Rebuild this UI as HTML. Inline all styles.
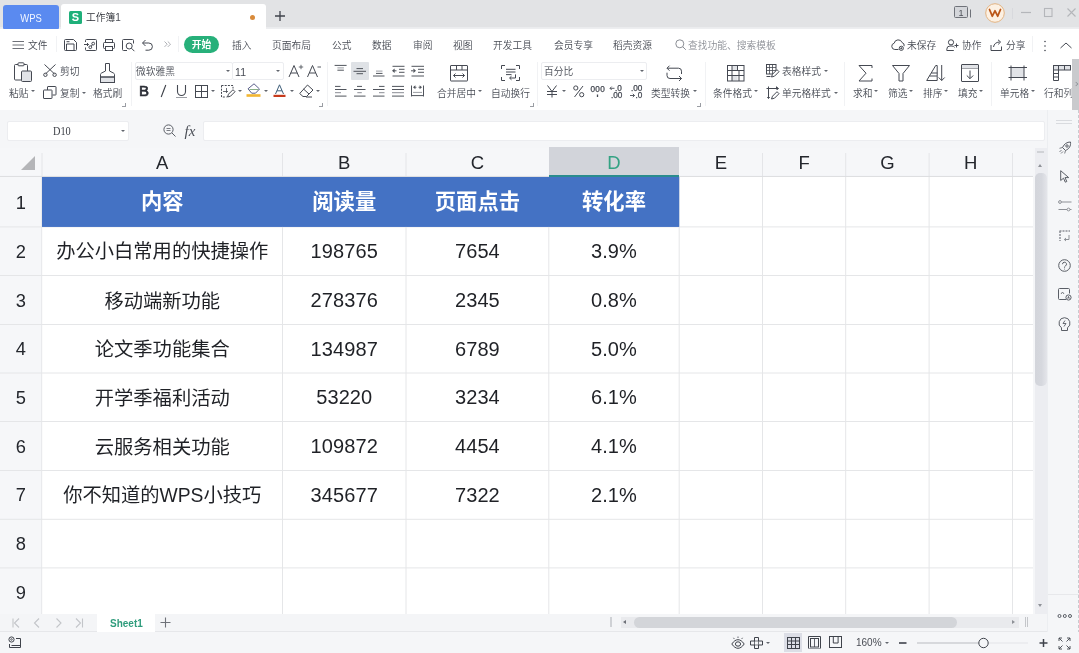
<!DOCTYPE html>
<html lang="zh-CN">
<head>
<meta charset="utf-8">
<title>工作簿1 - WPS</title>
<style>
*{box-sizing:border-box;margin:0;padding:0}
html,body{width:1079px;height:653px;overflow:hidden;background:#fff}
body{position:relative;will-change:transform;font-family:"Liberation Sans","Noto Sans CJK SC",sans-serif;color:#3a3e47;font-size:10px;line-height:1}
.a{position:absolute}
.t{position:absolute;white-space:nowrap;line-height:12px;height:12px;font-size:9.75px;color:#474b54;font-weight:350}
svg{position:absolute;overflow:visible;fill:none;stroke:#454952;stroke-width:1}
#title{left:0;top:0;width:1079px;height:29px;background:linear-gradient(180deg,#e2e3e5 0,#e2e3e5 26.5px,#ebecee 27.5px,#eeeff1 29px)}
#wps{left:3px;top:5px;width:56px;height:24px;background:#5a8af0;border-radius:3px 3px 1px 1px;color:#f2f6ff;font-size:11.5px;text-align:center;line-height:26px}
#wps span{display:inline-block;transform:scaleX(.82)}
#tab{left:61px;top:4px;width:205px;height:25px;background:#fff;border-radius:3px 3px 0 0}
#menu{left:0;top:29px;width:1079px;height:29px;background:#fff}
#ribbon{left:0;top:58px;width:1079px;height:52px;background:#fff}
#fbar{left:0;top:110px;width:1047px;height:38px;background:#f5f6f8}
#side{left:1047px;top:110px;width:32px;height:543px;background:#f5f6f8;border-left:1px solid #eceef1}
.box{position:absolute;background:#fff;border:1px solid #ecedf0;border-radius:2px}
#grid{left:0;top:148px;width:1033px;height:466px;background:#fff}
.c{text-align:center;font-size:19.3px;color:#1f2126;white-space:nowrap;padding-top:1.5px}
.n{font-size:20px;letter-spacing:.1px;padding-top:0}
.hd{text-align:center;font-size:21.3px;font-weight:700;color:#fff;line-height:50px;height:50px;top:29px;white-space:nowrap}
.colh{top:0;height:29px;line-height:29px;text-align:center;font-size:18.5px;color:#24272d}
.rown{left:0;width:41.5px;text-align:center;font-size:18.3px;color:#24272d;padding-top:.8px}
#sheetbar{left:0;top:613.5px;width:1047px;height:18.5px;background:#f4f5f7;border-bottom:1px solid #e6e7ea}
#status{left:0;top:632px;width:1079px;height:21px;background:#f5f6f8}

</style>
</head>
<body>
<!-- TITLE BAR -->
<div class="a" id="title"></div>
<div class="a" id="wps"><span>WPS</span></div>
<div class="a" id="tab"></div>
<div class="a" style="left:69px;top:11px;width:13px;height:13px;background:#1fb07a;border-radius:1.5px;color:#fff;font-size:11px;font-weight:700;line-height:13px;text-align:center">S</div>
<div class="t" style="left:86px;top:12.1px;color:#2b2e35">工作簿<span style="font-size:10px;font-weight:400;color:#4a4d55">1</span></div>
<div class="a" style="left:250px;top:15px;width:5px;height:5px;border-radius:50%;background:#d88a3a"></div>
<svg style="left:954px;top:6px;" width="18" height="12" viewBox="0 0 18 12"><rect x="0.5" y="0.5" width="13" height="11" rx="1" stroke="#6f7279" fill="#d4d6da"/><path d="M16.5 3.5v8" stroke="#6f7279"/><text x="7" y="9.6" font-family="Liberation Sans,sans-serif" font-size="9" text-anchor="middle" fill="#4d5058" stroke="none">1</text></svg>
<svg style="left:985px;top:3px;" width="20" height="20" viewBox="0 0 20 20"><circle cx="10" cy="10" r="9.3" fill="#fdf1e3" stroke="#e3b483" stroke-width="1"/><path d="M4.500 6.500 L7.300 13.200 L10 7.800 L12.700 13.200 L15.500 6.500" stroke="#bb571a" stroke-width="1.800" stroke-linejoin="round" stroke-linecap="round" fill="none"/></svg>
<div class="a" style="left:1012px;top:8px;width:1px;height:11px;background:#d8d9dd"></div>
<svg style="left:1020px;top:7px;" width="60" height="12" viewBox="0 0 60 12"><path d="M1 5.5h10" stroke="#b4b6ba" stroke-width="1.2"/><rect x="24.500" y="1.500" width="7.500" height="8" stroke="#b4b6ba" stroke-width="1.100"/><path d="M47.5 1.5l8 8M55.5 1.5l-8 8" stroke="#b4b6ba" stroke-width="1.1"/></svg>
<svg style="left:274px;top:10px;" width="12" height="12" viewBox="0 0 12 12"><path d="M6 1v10M1 6h10" stroke="#3f434b" stroke-width="1.3"/></svg>
<!-- MENU ROW -->
<div class="a" id="menu"></div>
<svg style="left:12px;top:40.7px;" width="12" height="9" viewBox="0 0 12 9"><path d="M0.5 0.5h11.5M0.5 4h11.5M0.5 7.5h11.5" stroke="#6f7279" stroke-width="1"/></svg>
<svg style="left:64px;top:38.7px;" width="13" height="12" viewBox="0 0 13 12"><path d="M0.500 1.500a1 1 0 0 1 1-1h8l3 3v7a1 1 0 0 1-1 1h-10a1 1 0 0 1-1-1z"/><path d="M2.500 11.500v-6.500h7.500v6.500M2.500 2.700h3"/></svg>
<svg style="left:85px;top:38.7px;" width="12" height="12" viewBox="0 0 12 12"><path d="M0.5 3v-1.5a1 1 0 0 1 1-1h9a1 1 0 0 1 1 1v9a1 1 0 0 1-1 1h-9a1 1 0 0 1-1-1v-2"/><path d="M-1 5.5h4.5M2 4l1.5 1.5L2 7"/><circle cx="5.3" cy="8.2" r="1.4"/><circle cx="8.2" cy="4.6" r="1.4"/><path d="M6.2 7.2l1.2-1.5"/></svg>
<svg style="left:103px;top:38.7px;" width="12" height="12" viewBox="0 0 12 12"><path d="M2.5 3.5v-3h7v3"/><rect x="0.5" y="3.5" width="11" height="6" rx="1"/><rect x="2.5" y="7.5" width="7" height="4" fill="#fff"/></svg>
<svg style="left:122px;top:38.7px;" width="13" height="13" viewBox="0 0 13 13"><path d="M11.5 4.5v-3a1 1 0 0 0-1-1h-9a1 1 0 0 0-1 1v9a1 1 0 0 0 1 1h3.5"/><circle cx="7.2" cy="7" r="3"/><path d="M9.4 9.2l3 3"/></svg>
<svg style="left:141px;top:38.7px;" width="13" height="13" viewBox="0 0 13 13"><path d="M4.5 1L1.5 4l3 3"/><path d="M1.8 4h6a3.6 3.6 0 0 1 0 7.2h-3.3"/></svg>
<svg style="left:164px;top:41px;" width="7" height="7" viewBox="0 0 7 7"><path d="M0.5 0.5l2.700 2.700l-2.700 2.700M3.800 0.500l2.700 2.700l-2.700 2.700" stroke="#9a9da3" stroke-width="0.8"/></svg>
<svg style="left:675px;top:38.7px;" width="12" height="12" viewBox="0 0 12 12"><circle cx="4.8" cy="4.8" r="4" stroke="#8b8e95"/><path d="M7.8 7.8l3 3" stroke="#8b8e95"/></svg>
<svg style="left:891px;top:38.7px;" width="14" height="12" viewBox="0 0 14 12"><path d="M7.5 10.5H3.8a3.2 3.2 0 0 1-.6-6.3 4.1 4.1 0 0 1 7.9-.6 3 3 0 0 1 2 3.6"/><circle cx="10.3" cy="9.3" r="2.1"/><circle cx="10.3" cy="9.3" r="0.6" fill="#454952"/></svg>
<svg style="left:946px;top:38.7px;" width="13" height="12" viewBox="0 0 13 12"><circle cx="5" cy="3.3" r="2.6"/><path d="M0.8 11.5v-1.3a3.2 3.2 0 0 1 3.2-3.2h2a3.2 3.2 0 0 1 2.6 1.4M0.8 11.5h7"/><path d="M8.5 6.5h4M10.5 4.5v4"/></svg>
<svg style="left:990px;top:38.7px;" width="13" height="12" viewBox="0 0 13 12"><path d="M1 6v5.5h10.5V7.5"/><path d="M3.5 8c.5-3 2.5-4.8 6-5"/><path d="M8 0.8l2.6 2.2-2.4 2.4"/></svg>
<svg style="left:1043px;top:39.7px;" width="4" height="12" viewBox="0 0 4 12"><circle cx="2" cy="1.5" r="0.8" fill="#454952" stroke="none"/><circle cx="2" cy="6" r="0.8" fill="#454952" stroke="none"/><circle cx="2" cy="10.5" r="0.8" fill="#454952" stroke="none"/></svg>
<svg style="left:1060px;top:41.7px;" width="12" height="7" viewBox="0 0 12 7"><path d="M0.5 6l5.5-5l5.5 5"/></svg>
<div class="t" style="left:28px;top:39.6px;">文件</div>
<div class="a" style="left:56px;top:36px;width:1px;height:16px;background:#f1f2f4"></div>
<div class="a" style="left:178px;top:36px;width:1px;height:16px;background:#f1f2f4"></div>
<div class="a" style="left:184px;top:36px;width:35px;height:17px;border-radius:9px;background:#27b07a;color:#fff;font-size:9.75px;font-weight:700;text-align:center;line-height:18.5px">开始</div>
<div class="t" style="left:232px;top:39.6px;">插入</div>
<div class="t" style="left:272px;top:39.6px;">页面布局</div>
<div class="t" style="left:332px;top:39.6px;">公式</div>
<div class="t" style="left:372px;top:39.6px;">数据</div>
<div class="t" style="left:413px;top:39.6px;">审阅</div>
<div class="t" style="left:453px;top:39.6px;">视图</div>
<div class="t" style="left:493px;top:39.6px;">开发工具</div>
<div class="t" style="left:554px;top:39.6px;">会员专享</div>
<div class="t" style="left:613px;top:39.6px;">稻壳资源</div>
<div class="t" style="left:688px;top:39.6px;color:#8b8e95">查找功能、搜索模板</div>
<div class="t" style="left:907px;top:39.6px;">未保存</div>
<div class="t" style="left:962px;top:39.6px;">协作</div>
<div class="t" style="left:1006px;top:39.6px;">分享</div>
<div class="a" style="left:1032px;top:36px;width:1px;height:16px;background:#f1f2f4"></div>
<!-- RIBBON -->
<div class="a" id="ribbon"></div>
<div class="a" style="left:350.5px;top:61.5px;width:18.5px;height:18.5px;background:#dfe2e6;border-radius:1px"></div>
<svg style="left:14px;top:62px;" width="19" height="21" viewBox="0 0 19 21"><path d="M4 2.5h-2.5a1 1 0 0 0-1 1v13.5a1 1 0 0 0 1 1h6M10 2.5h2.500a1 1 0 0 1 1 1v5.5"/><rect x="4" y="0.8" width="6" height="3" rx="0.8"/><rect x="7.5" y="9" width="10" height="10.5" rx="1" fill="#e1e3e7"/></svg>
<svg style="left:43px;top:63px;" width="15" height="15" viewBox="0 0 15 15"><path d="M1.5 1.5l10 9.4M12.5 1.5l-10 9.4"/><circle cx="2.4" cy="11.8" r="1.7"/><circle cx="11.6" cy="11.8" r="1.7"/></svg>
<svg style="left:43px;top:86px;" width="14" height="14" viewBox="0 0 14 14"><path d="M4.5 4V1a.5.5 0 0 1 .5-.5h7.500a.5.5 0 0 1 .5.5v7.500a.5.5 0 0 1-.5.5h-3"/><rect x="0.5" y="4" width="8.5" height="8.5" rx=".5"/></svg>
<svg style="left:100px;top:63px;" width="15" height="21" viewBox="0 0 15 21"><path d="M5.500 0.5h4v7.500l4.200 2.200a1.500 1.500 0 0 1 .8 1.300v8h-14v-8a1.500 1.500 0 0 1 .8-1.300l4.200-2.200z"/><rect x="0.5" y="14" width="14" height="5.500" fill="#e1e3e7"/><path d="M0.5 14h14"/></svg>
<svg style="left:288px;top:64px;" width="34" height="14" viewBox="0 0 34 14"><path d="M1 13L6 1.500L11 13M2.800 9h6.400" stroke-width="1"/><path d="M10.800 3h4.400M13 0.800v4.400" stroke-width="0.800"/><path d="M19.500 13L24.500 1.500L29.500 13M21.300 9h6.400" stroke-width="1"/><path d="M29.500 3h3.500" stroke-width="0.9"/></svg>
<svg style="left:137px;top:83px;" width="54" height="16" viewBox="0 0 54 16"><text x="2" y="13.200" font-family="Liberation Sans,sans-serif" font-weight="400" font-size="15" fill="#2b2e36" stroke="#2b2e36" stroke-width="0.700">B</text><path d="M28.800 2l-4.600 12" stroke="#3b3f47" stroke-width="1.100"/><path d="M40.500 2v6.500a4 4 0 0 0 8 0v-6.500" stroke-width="1.100"/><path d="M39 14.500h11" stroke="#9b9ea4" stroke-width="1"/></svg>
<svg style="left:195px;top:85px;" width="13" height="13" viewBox="0 0 13 13"><rect x="0.5" y="0.5" width="12" height="12"/><path d="M6.500 0.5v12M0.5 6.500h12"/></svg>
<svg style="left:221px;top:85px;" width="15" height="13" viewBox="0 0 15 13"><path d="M0.5 0.5h11.500v3" stroke-dasharray="2 1.200"/><path d="M0.5 0.5v11.500h5" stroke-dasharray="2 1.200"/><path d="M2 6.500h5M5.500 3v5" stroke-width="0.8"/><path d="M6.500 12l1-2.800l4.500-4.500l2 2l-4.500 4.500z" fill="#fff"/></svg>
<svg style="left:246px;top:83px;" width="15" height="15" viewBox="0 0 15 15"><path d="M8 0.800l5.500 5.200l-4 4.200h-3.800l-3.700-4.400z" fill="#fff" stroke="#5a5e8a"/><path d="M3.500 6.500h9" stroke="#6a9a6a" stroke-width="0.8"/><rect x="0.5" y="11.200" width="14" height="2.600" fill="#f2b632" stroke="none"/></svg>
<svg style="left:273px;top:84px;" width="13" height="14" viewBox="0 0 13 14"><path d="M2.500 10L6.500 0.800L10.500 10M4 6.800h5" stroke="#3f5f7a" stroke-width="1"/><rect x="0.500" y="10.800" width="12" height="2.200" fill="#c63a1c" stroke="none"/></svg>
<svg style="left:299px;top:84px;" width="15" height="14" viewBox="0 0 15 14"><path d="M8.500 1l5.500 5l-6.500 6.500h-3.500l-3.300-3z"/><path d="M4.500 5l5.500 5M7 13h6"/></svg>
<svg style="left:0px;top:0px;" width="1079" height="653" viewBox="0 0 1079 653"><path d="M334.600 65.400h12M337.400 70.200h6.500" stroke="#50545c"/><path d="M337.400 67.900h6.500" stroke="#9a9da3"/><path d="M356.500 68.600h6.500M353.500 71.300h12.500M356.500 73.700h6.500" stroke="#50545c"/><path d="M376 73.400h6.500M373 76h11.500" stroke="#50545c"/><path d="M376 71.100h6.500" stroke="#9a9da3"/><path d="M392.500 66.300h12M399 69.300h5.500M399 72.300h5.500M392.500 76h12" stroke="#50545c"/><path d="M392 70.800l2.600-2.200v4.400z" fill="#50545c" stroke="none"/><path d="M394 70.800h2.500" stroke="#50545c"/><path d="M411.500 66.300h12.500M418 69.300h6M418 72.300h6M411.500 76h12.500" stroke="#50545c"/><path d="M416 70.800l-2.600-2.200v4.400z" fill="#50545c" stroke="none"/><path d="M411 70.800h2.500" stroke="#50545c"/><path d="M335 86.400h5.500M335 89.500h11.500M335 96.100h11.500" stroke="#50545c"/><path d="M335 92.700h6" stroke="#8a8d94"/><path d="M357 86.400h5M354 89.500h11.500M354 96.100h11.500" stroke="#50545c"/><path d="M357.300 92.700h4.500" stroke="#8a8d94"/><path d="M379 86.400h5.500M373 89.500h11.500M373 96.100h11.500" stroke="#50545c"/><path d="M379 92.700h5.500" stroke="#8a8d94"/><path d="M392 86.400h12M392 89.500h12M392 96.100h12" stroke="#50545c"/><path d="M392 92.700h12" stroke="#8a8d94"/><path d="M411.500 85.500v11M423.500 85.500v11M412 95.600h11" stroke="#50545c"/><path d="M413 92.400h9" stroke="#9a9da3"/><path d="M413 87.300l2.400-2v4z M422 87.300l-2.400-2v4z" fill="#50545c" stroke="none"/><path d="M414.500 87.300h2M418.500 87.300h2" stroke="#50545c" stroke-width="0.800"/></svg>
<svg style="left:450px;top:65px;" width="19" height="17" viewBox="0 0 19 17"><rect x="0.5" y="0.5" width="17" height="15.500" rx=".5"/><path d="M0.5 5h17M6.500 0.500v4.500M12 0.500v4.500"/><path d="M3.500 10.500h11M5.500 8.500l-2 2l2 2M12.500 8.500l2 2l-2 2"/></svg>
<svg style="left:0px;top:0px;" width="1079" height="653" viewBox="0 0 1079 653"><path d="M501.500 69v-3.500h3.500M516 65.500h3.500v3.500M519.500 77v3.500h-3.500M505 80.500h-3.500v-3.500"/><path d="M506 69.300h9.500M506 72h9.500M506 74.600h5.500M515.500 74.400v3.600h-5.500M511.500 76.200l-2 1.800l2 1.800"/></svg>
<svg style="left:546px;top:85px;" width="12" height="13" viewBox="0 0 12 13"><path d="M1.500 0.500l4.500 6l4.500-6M6 6.500v6M1 6.500h10M1 9.500h10"/></svg>
<svg style="left:573px;top:85px;" width="12" height="13" viewBox="0 0 12 13"><circle cx="2.800" cy="3" r="2.100"/><circle cx="8.700" cy="9.700" r="2.100"/><path d="M10 1L1.500 12"/></svg>
<svg style="left:590px;top:84px;" width="15" height="14" viewBox="0 0 15 14"><text x="0.5" y="7.500" font-family="Liberation Sans,sans-serif" font-size="8.200" fill="#454952" stroke="#454952" stroke-width="0.250" letter-spacing="0.300">000</text><path d="M7.500 10.500v2.500" stroke-width="1.300"/></svg>
<svg style="left:609px;top:84px;" width="15" height="15" viewBox="0 0 15 15"><text x="6" y="7" font-family="Liberation Sans,sans-serif" font-size="8.200" fill="#454952" stroke="#454952" stroke-width="0.250">.0</text><text x="2" y="14.300" font-family="Liberation Sans,sans-serif" font-size="8.200" fill="#454952" stroke="#454952" stroke-width="0.250">.00</text><path d="M1 4.300h4.500M2.700 2.600l-1.700 1.700l1.700 1.700" stroke-width="0.9"/></svg>
<svg style="left:629px;top:84px;" width="15" height="15" viewBox="0 0 15 15"><text x="2" y="7" font-family="Liberation Sans,sans-serif" font-size="8.200" fill="#454952" stroke="#454952" stroke-width="0.250">.00</text><text x="6.500" y="14.300" font-family="Liberation Sans,sans-serif" font-size="8.200" fill="#454952" stroke="#454952" stroke-width="0.250">.0</text><path d="M1 11.500h4.500M3.800 9.800l1.700 1.700l-1.700 1.700" stroke-width="0.9"/></svg>
<svg style="left:0px;top:0px;" width="1079" height="653" viewBox="0 0 1079 653"><path d="M667 68.200h11.500a3 3 0 0 1 3 3v2.800M669.500 65.700l-2.500 2.500l2.500 2.500"/><path d="M681.500 78.500h-11.500a3 3 0 0 1-3-3v-2.800M679 76l2.500 2.500l-2.500 2.500"/></svg>
<svg style="left:727px;top:65px;" width="18" height="17" viewBox="0 0 18 17"><rect x="5" y="0.500" width="5.500" height="5" fill="#e1e3e7" stroke="none"/><rect x="5" y="10.500" width="5.500" height="5" fill="#e1e3e7" stroke="none"/><rect x="0.500" y="0.500" width="16.500" height="15.500"/><path d="M5 0.500v15.500M0.500 5.500h16.500M0.500 10.500h16.500M10.500 0.500v5M12 5.500v10.500" /></svg>
<svg style="left:766px;top:64px;" width="15" height="14" viewBox="0 0 15 14"><rect x="0.500" y="0.500" width="9.500" height="9.500"/><path d="M0.500 3.500h9.500M0.500 6.500h9.500M3.500 0.500v9.500M6.500 0.500v9.500" stroke-width="0.8"/><path d="M5.500 13l1-2.800l4.500-4.500l2 2l-4.500 4.500z" fill="#fff"/><path d="M0.500 12.500h4"/></svg>
<svg style="left:766px;top:86px;" width="15" height="14" viewBox="0 0 15 14"><path d="M0.500 2.500h12M2.500 0.500v12M10.500 0.500v3" /><path d="M1 11l1.500 1.500l1.500-1.500M11 1l1.500 1.500l-1.500 1.500" stroke-width="0.8"/><path d="M5.500 13l1-2.800l4.500-4.500l2 2l-4.500 4.500z" fill="#fff"/></svg>
<svg style="left:858px;top:65px;" width="15" height="17" viewBox="0 0 15 17"><path d="M14 3v-2.500h-13l7 7.700l-7 7.800h13v-2.500" stroke-linejoin="miter"/></svg>
<svg style="left:892px;top:65px;" width="18" height="17" viewBox="0 0 18 17"><path d="M0.500 0.500h17l-6.500 8v7.500h-4v-7.500z" stroke-linejoin="round"/></svg>
<svg style="left:926px;top:64px;" width="19" height="18" viewBox="0 0 19 18"><path d="M0.700 16.500L9.700 1.500h1.500v15zM3.500 12h7.500M5.300 9h6" stroke-linejoin="miter"/><path d="M15.700 1v15.500M12.700 13.500l3 3l3-3"/></svg>
<svg style="left:961px;top:64px;" width="18" height="18" viewBox="0 0 18 18"><rect x="0.500" y="0.500" width="17" height="17" rx=".5"/><path d="M0.500 4h17" /><rect x="1" y="1" width="16" height="3" fill="#e1e3e7" stroke="none"/><path d="M9 6.500v8M5.800 11.500l3.200 3.200l3.200-3.200"/></svg>
<svg style="left:1008px;top:65px;" width="20" height="16" viewBox="0 0 20 16"><rect x="3" y="3" width="13" height="9" fill="#e1e3e7" stroke="none"/><path d="M0.500 2.500h18.500M0.500 12.500h18.500M3 0.500v15M16 0.500v15"/></svg>
<svg style="left:1053px;top:65px;" width="18" height="17" viewBox="0 0 18 17"><rect x="0.500" y="0.500" width="5" height="4.500" fill="#e1e3e7"/><rect x="5.500" y="0.500" width="12" height="4.500" fill="#e1e3e7"/><path d="M11.500 0.500v4.500M0.500 5v10.500h5V5M0.500 8.500h5M0.500 12h5"/></svg>
<div class="t" style="left:9px;top:87.5px;">粘贴</div>
<div class="a" style="left:31px;top:90px;width:0;height:0;border-left:2px solid transparent;border-right:2px solid transparent;border-top:2.3px solid #62666e"></div>
<div class="t" style="left:60px;top:65.5px;">剪切</div>
<div class="t" style="left:60px;top:87.5px;">复制</div>
<div class="a" style="left:82px;top:92px;width:0;height:0;border-left:2px solid transparent;border-right:2px solid transparent;border-top:2.3px solid #62666e"></div>
<div class="t" style="left:93px;top:87.5px;">格式刷</div>
<div class="a" style="left:122px;top:103px;width:4px;height:4px;border-right:1px solid #9a9da3;border-bottom:1px solid #9a9da3"></div>
<div class="a" style="left:131px;top:62px;width:1px;height:44px;background:#f1f2f4"></div>
<div class="box" style="left:135px;top:62px;width:98px;height:18px"></div>
<div class="box" style="left:232px;top:62px;width:52px;height:18px"></div>
<div class="t" style="left:136px;top:65.5px;">微软雅黑</div>
<div class="a" style="left:226px;top:70px;width:0;height:0;border-left:2px solid transparent;border-right:2px solid transparent;border-top:2.3px solid #62666e"></div>
<div class="t" style="left:235px;top:65.5px;font-size:10.5px;letter-spacing:.3px">11</div>
<div class="a" style="left:276px;top:70px;width:0;height:0;border-left:2px solid transparent;border-right:2px solid transparent;border-top:2.3px solid #62666e"></div>
<div class="a" style="left:211px;top:90px;width:0;height:0;border-left:2px solid transparent;border-right:2px solid transparent;border-top:2.3px solid #62666e"></div>
<div class="a" style="left:238px;top:90px;width:0;height:0;border-left:2px solid transparent;border-right:2px solid transparent;border-top:2.3px solid #62666e"></div>
<div class="a" style="left:264px;top:90px;width:0;height:0;border-left:2px solid transparent;border-right:2px solid transparent;border-top:2.3px solid #62666e"></div>
<div class="a" style="left:290px;top:90px;width:0;height:0;border-left:2px solid transparent;border-right:2px solid transparent;border-top:2.3px solid #62666e"></div>
<div class="a" style="left:316px;top:90px;width:0;height:0;border-left:2px solid transparent;border-right:2px solid transparent;border-top:2.3px solid #62666e"></div>
<div class="a" style="left:319px;top:103px;width:4px;height:4px;border-right:1px solid #9a9da3;border-bottom:1px solid #9a9da3"></div>
<div class="a" style="left:327px;top:62px;width:1px;height:44px;background:#f1f2f4"></div>
<div class="t" style="left:437px;top:87.5px;">合并居中</div>
<div class="a" style="left:478px;top:90px;width:0;height:0;border-left:2px solid transparent;border-right:2px solid transparent;border-top:2.3px solid #62666e"></div>
<div class="t" style="left:491px;top:87.5px;">自动换行</div>
<div class="a" style="left:530px;top:103px;width:4px;height:4px;border-right:1px solid #9a9da3;border-bottom:1px solid #9a9da3"></div>
<div class="a" style="left:537px;top:62px;width:1px;height:44px;background:#f1f2f4"></div>
<div class="box" style="left:541px;top:62px;width:106px;height:18px"></div>
<div class="t" style="left:544px;top:65.5px;">百分比</div>
<div class="a" style="left:640px;top:70px;width:0;height:0;border-left:2px solid transparent;border-right:2px solid transparent;border-top:2.3px solid #62666e"></div>
<div class="a" style="left:562.3px;top:89.5px;width:0;height:0;border-left:2px solid transparent;border-right:2px solid transparent;border-top:2.3px solid #62666e"></div>
<div class="t" style="left:651px;top:87.5px;">类型转换</div>
<div class="a" style="left:693px;top:90px;width:0;height:0;border-left:2px solid transparent;border-right:2px solid transparent;border-top:2.3px solid #62666e"></div>
<div class="a" style="left:697px;top:103px;width:4px;height:4px;border-right:1px solid #9a9da3;border-bottom:1px solid #9a9da3"></div>
<div class="a" style="left:705px;top:62px;width:1px;height:44px;background:#f1f2f4"></div>
<div class="t" style="left:713px;top:87.5px;">条件格式</div>
<div class="a" style="left:754px;top:90px;width:0;height:0;border-left:2px solid transparent;border-right:2px solid transparent;border-top:2.3px solid #62666e"></div>
<div class="t" style="left:782px;top:65.5px;">表格样式</div>
<div class="a" style="left:824px;top:70px;width:0;height:0;border-left:2px solid transparent;border-right:2px solid transparent;border-top:2.3px solid #62666e"></div>
<div class="t" style="left:782px;top:87.5px;">单元格样式</div>
<div class="a" style="left:834px;top:92px;width:0;height:0;border-left:2px solid transparent;border-right:2px solid transparent;border-top:2.3px solid #62666e"></div>
<div class="a" style="left:844px;top:62px;width:1px;height:44px;background:#f1f2f4"></div>
<div class="t" style="left:853px;top:87.5px;">求和</div>
<div class="a" style="left:874px;top:90px;width:0;height:0;border-left:2px solid transparent;border-right:2px solid transparent;border-top:2.3px solid #62666e"></div>
<div class="t" style="left:888px;top:87.5px;">筛选</div>
<div class="a" style="left:909px;top:90px;width:0;height:0;border-left:2px solid transparent;border-right:2px solid transparent;border-top:2.3px solid #62666e"></div>
<div class="t" style="left:923px;top:87.5px;">排序</div>
<div class="a" style="left:944px;top:90px;width:0;height:0;border-left:2px solid transparent;border-right:2px solid transparent;border-top:2.3px solid #62666e"></div>
<div class="t" style="left:958px;top:87.5px;">填充</div>
<div class="a" style="left:979px;top:90px;width:0;height:0;border-left:2px solid transparent;border-right:2px solid transparent;border-top:2.3px solid #62666e"></div>
<div class="a" style="left:991px;top:62px;width:1px;height:44px;background:#f1f2f4"></div>
<div class="t" style="left:1000px;top:87.5px;">单元格</div>
<div class="a" style="left:1031px;top:90px;width:0;height:0;border-left:2px solid transparent;border-right:2px solid transparent;border-top:2.3px solid #62666e"></div>
<div class="t" style="left:1044px;top:87.5px;">行和列</div>
<div class="a" style="left:1072px;top:59px;width:7px;height:51px;background:#c9cacd"></div>
<div class="a" style="left:1074px;top:82px;width:4px;height:4px;border-right:1px solid #8d9096;border-top:1px solid #8d9096;transform:rotate(45deg) scale(.8)"></div>
<!-- FORMULA BAR -->
<div class="a" id="fbar"></div>
<div class="box" style="left:6.500px;top:121px;width:122.500px;height:20px"></div>
<div class="t" style="left:53px;top:125px;font-family:'Liberation Serif',serif;font-size:12px;color:#3c3f46;transform:scaleX(.86);transform-origin:0 50%">D10</div>
<div class="a" style="left:121px;top:130px;width:0;height:0;border-left:2px solid transparent;border-right:2px solid transparent;border-top:2.3px solid #62666e"></div>
<svg style="left:163px;top:124px;" width="14" height="14" viewBox="0 0 14 14"><circle cx="5.500" cy="5.500" r="4.600" stroke="#5a5e66"/><path d="M3.500 4.500h4M3.500 6.500h4" stroke="#5a5e66" stroke-width="0.8"/><path d="M9 9l3.500 3.500" stroke="#5a5e66"/></svg>
<div class="t" style="left:184.500px;top:123px;font-family:'Liberation Serif',serif;font-style:italic;font-size:15px;line-height:16px;height:16px;color:#4a4e56">fx</div>
<div class="box" style="left:203px;top:121px;width:842px;height:20px"></div>
<!-- GRID -->
<div class="a" id="grid">
<div class="a" style="left:0;top:0;width:1033px;height:29px;background:#f6f7f9"></div>
<div class="a" style="left:20.5px;top:7.5px;width:0;height:0;border-left:14px solid transparent;border-bottom:14px solid #b4b5b8"></div>
<div class="a colh" style="left:42px;width:240.5px">A</div>
<div class="a colh" style="left:282.5px;width:123.5px">B</div>
<div class="a colh" style="left:406.0px;width:142.8px">C</div>
<div class="a" style="left:549px;top:-1px;width:130px;height:30px;background:#d2d4da;border-bottom:2px solid #2a8c8e"></div>
<div class="a colh" style="left:548.8px;width:130.4px;color:#33a283">D</div>
<div class="a colh" style="left:679.2px;width:83.3px">E</div>
<div class="a colh" style="left:762.5px;width:83.2px">F</div>
<div class="a colh" style="left:845.7px;width:83.4px">G</div>
<div class="a colh" style="left:929.1px;width:83.4px">H</div>
<div class="a" style="left:0;top:29px;width:41.500px;height:437px;background:#f6f7f9"></div>
<div class="a" style="left:42px;top:29px;width:637px;height:50px;background:#4472c4"></div>
<svg style="left:0;top:0" width="1033" height="466" viewBox="0 0 1033 466"><path d="M282.5 5V29M406.0 5V29M762.5 5V29M845.7 5V29M929.1 5V29M1012.5 5V29M42 5V29" stroke="#e4e5e8"/><path d="M0 28.450H549M679 28.450H1033" stroke="#dcdde0"/><path d="M41.700 29V466" stroke="#e6e7ea"/><path d="M282.5 29V466M406.0 29V466M548.8 29V466M679.2 29V466M762.5 29V466M845.7 29V466M929.1 29V466M1012.5 29V466M0 78.9H1033M0 127.5H1033M0 176.5H1033M0 225.0H1033M0 273.5H1033M0 322.5H1033M0 371.3H1033M0 419.9H1033" stroke="#e5e6e8"/><rect x="42" y="29" width="637.200" height="49.900" fill="#4472c4" stroke="none"/></svg>
<div class="a rown" style="top:29.0px;height:49.9px;line-height:49.9px">1</div>
<div class="a rown" style="top:78.9px;height:48.6px;line-height:48.6px">2</div>
<div class="a rown" style="top:127.5px;height:49.0px;line-height:49.0px">3</div>
<div class="a rown" style="top:176.5px;height:48.5px;line-height:48.5px">4</div>
<div class="a rown" style="top:225.0px;height:48.5px;line-height:48.5px">5</div>
<div class="a rown" style="top:273.5px;height:49.0px;line-height:49.0px">6</div>
<div class="a rown" style="top:322.5px;height:48.8px;line-height:48.8px">7</div>
<div class="a rown" style="top:371.3px;height:48.6px;line-height:48.6px">8</div>
<div class="a rown" style="top:419.9px;height:48.6px;line-height:48.6px">9</div>
<div class="a hd" style="left:42px;width:240.5px">内容</div>
<div class="a hd" style="left:282.5px;width:123.5px">阅读量</div>
<div class="a hd" style="left:406.0px;width:142.8px">页面点击</div>
<div class="a hd" style="left:548.8px;width:130.4px">转化率</div>
<div class="a c" style="left:42px;width:240.5px;top:78.9px;height:48.6px;line-height:48.6px">办公小白常用的快捷操作</div>
<div class="a c n" style="left:282.5px;width:123.5px;top:78.9px;height:48.6px;line-height:48.6px">198765</div>
<div class="a c n" style="left:406.0px;width:142.8px;top:78.9px;height:48.6px;line-height:48.6px">7654</div>
<div class="a c n" style="left:548.8px;width:130.4px;top:78.9px;height:48.6px;line-height:48.6px">3.9%</div>
<div class="a c" style="left:42px;width:240.5px;top:127.5px;height:49.0px;line-height:49.0px">移动端新功能</div>
<div class="a c n" style="left:282.5px;width:123.5px;top:127.5px;height:49.0px;line-height:49.0px">278376</div>
<div class="a c n" style="left:406.0px;width:142.8px;top:127.5px;height:49.0px;line-height:49.0px">2345</div>
<div class="a c n" style="left:548.8px;width:130.4px;top:127.5px;height:49.0px;line-height:49.0px">0.8%</div>
<div class="a c" style="left:42px;width:240.5px;top:176.5px;height:48.5px;line-height:48.5px">论文季功能集合</div>
<div class="a c n" style="left:282.5px;width:123.5px;top:176.5px;height:48.5px;line-height:48.5px">134987</div>
<div class="a c n" style="left:406.0px;width:142.8px;top:176.5px;height:48.5px;line-height:48.5px">6789</div>
<div class="a c n" style="left:548.8px;width:130.4px;top:176.5px;height:48.5px;line-height:48.5px">5.0%</div>
<div class="a c" style="left:42px;width:240.5px;top:225.0px;height:48.5px;line-height:48.5px">开学季福利活动</div>
<div class="a c n" style="left:282.5px;width:123.5px;top:225.0px;height:48.5px;line-height:48.5px">53220</div>
<div class="a c n" style="left:406.0px;width:142.8px;top:225.0px;height:48.5px;line-height:48.5px">3234</div>
<div class="a c n" style="left:548.8px;width:130.4px;top:225.0px;height:48.5px;line-height:48.5px">6.1%</div>
<div class="a c" style="left:42px;width:240.5px;top:273.5px;height:49.0px;line-height:49.0px">云服务相关功能</div>
<div class="a c n" style="left:282.5px;width:123.5px;top:273.5px;height:49.0px;line-height:49.0px">109872</div>
<div class="a c n" style="left:406.0px;width:142.8px;top:273.5px;height:49.0px;line-height:49.0px">4454</div>
<div class="a c n" style="left:548.8px;width:130.4px;top:273.5px;height:49.0px;line-height:49.0px">4.1%</div>
<div class="a c" style="left:42px;width:240.5px;top:322.5px;height:48.8px;line-height:48.8px">你不知道的WPS小技巧</div>
<div class="a c n" style="left:282.5px;width:123.5px;top:322.5px;height:48.8px;line-height:48.8px">345677</div>
<div class="a c n" style="left:406.0px;width:142.8px;top:322.5px;height:48.8px;line-height:48.8px">7322</div>
<div class="a c n" style="left:548.8px;width:130.4px;top:322.5px;height:48.8px;line-height:48.8px">2.1%</div>
</div>
<!-- SCROLLBAR / SIDE PANEL -->
<div class="a" style="left:1033px;top:148px;width:14px;height:466px;background:linear-gradient(90deg,#f5f6f8 0,#f5f6f8 2px,#ecedf1 2px)"></div>
<div class="a" style="left:1035px;top:173px;width:12px;height:213px;background:linear-gradient(90deg,#d3d5db 0,#d6d8de 55%,#e4e5ea 100%);border-radius:5px"></div>
<div class="a" style="left:1037px;top:151px;width:7px;height:2px;background:#d0d2d6"></div>
<div class="a" style="left:1038px;top:164px;width:0;height:0;border-left:2.5px solid transparent;border-right:2.5px solid transparent;border-bottom:3px solid #8f9298"></div>
<div class="a" style="left:1038px;top:604px;width:0;height:0;border-left:2.5px solid transparent;border-right:2.5px solid transparent;border-top:3px solid #8f9298"></div>
<div class="a" id="side"></div>
<div class="a" style="left:1056px;top:120px;width:16px;height:1px;background:#d9dbdf"></div><div class="a" style="left:1056px;top:123px;width:16px;height:1px;background:#d9dbdf"></div>
<svg style="left:1058px;top:141px;" width="14" height="14" viewBox="0 0 14 14"><path d="M12.500 1c-3.500 0-6.300 1.800-8 5.500l3 3c3.700-1.700 5.500-4.500 5-8.500z" stroke="#5a5e66"/><circle cx="9" cy="5" r="1.200" stroke="#5a5e66"/><path d="M4.500 6.500l-3 .8M7.500 9.500l-.8 3M3.500 9l-2 2M5 10.500l-2 2" stroke="#5a5e66" stroke-width="0.8"/></svg>
<svg style="left:1060px;top:170px;" width="11" height="13" viewBox="0 0 11 13"><path d="M0.700 0.700v9.800l2.800-2.300l1.800 4l1.500-.7l-1.800-3.900h3.700z" stroke="#5a5e66" stroke-linejoin="round"/></svg>
<svg style="left:1058px;top:199px;" width="14" height="12" viewBox="0 0 14 12"><circle cx="2" cy="3" r="1.400" stroke="#8d9096"/><path d="M3.500 3h10" stroke="#8d9096"/><circle cx="10.500" cy="10.500" r="1.400" stroke="#8d9096"/><path d="M0.500 10.500h8.500M12 10.500h1.500" stroke="#8d9096"/></svg>
<svg style="left:1059px;top:230px;" width="12" height="12" viewBox="0 0 12 12"><path d="M0.500 1h10.500" stroke="#8d9096" stroke-dasharray="2 1" stroke-width="1.500"/><path d="M1 1v10" stroke="#8d9096" stroke-dasharray="2 1" stroke-width="1.500"/><path d="M10 5v4.500h-4.500M7 8l-1.700 1.500l1.700 1.500" stroke="#8d9096"/></svg>
<svg style="left:1058px;top:259px;" width="13" height="13" viewBox="0 0 13 13"><circle cx="6.500" cy="6.500" r="5.800" stroke="#5a5e66"/><path d="M4.500 5.200a2 2 0 1 1 3 1.700c-.7.500-1 .8-1 1.800" stroke="#5a5e66"/><circle cx="6.500" cy="10" r="0.500" fill="#5a5e66" stroke="none"/></svg>
<svg style="left:1058px;top:288px;" width="14" height="13" viewBox="0 0 14 13"><path d="M8 11.500h-6.500a1 1 0 0 1-1-1v-9a1 1 0 0 1 1-1h9a1 1 0 0 1 1 1v4" stroke="#5a5e66"/><path d="M3 6l1.500-2l1.500 2" stroke="#5a5e66" stroke-width="0.8"/><circle cx="10.500" cy="9.500" r="2.600" stroke="#5a5e66"/><path d="M9 10h3M10.500 8v2" stroke="#5a5e66" stroke-width="0.8"/></svg>
<svg style="left:1058px;top:317px;" width="13" height="15" viewBox="0 0 13 15"><path d="M6.500 0.700a5.500 5.500 0 0 1 3 10.100v2.700h-6v-2.700a5.500 5.500 0 0 1 3-10.100z" stroke="#5a5e66"/><path d="M7 3.500l-2 3h3l-2 3" stroke="#5a5e66" stroke-width="0.9"/></svg>
<svg style="left:1057px;top:613px;" width="16" height="6" viewBox="0 0 16 6"><circle cx="2.500" cy="3" r="1.500" stroke="#5a5e66"/><circle cx="7.800" cy="3" r="1.500" stroke="#5a5e66"/><circle cx="13" cy="3" r="1.500" stroke="#5a5e66"/></svg>
<div class="a" style="left:1048px;top:594px;width:31px;height:1px;background:#e7e8eb"></div>
<div class="a" style="left:1078px;top:110px;width:0;height:543px;border-left:1px dashed #c9cbd0"></div>
<!-- BOTTOM -->
<div class="a" id="sheetbar"></div>
<div class="a" style="left:97px;top:613px;width:58px;height:19px;background:#fff"></div>
<div class="t" style="left:110px;top:617.5px;font-weight:700;color:#2f9c7c;font-size:10px">Sheet1</div>
<div class="a" style="left:621px;top:617px;width:398px;height:11px;background:#e9eaed"></div>
<div class="a" style="left:634px;top:617px;width:323px;height:11px;background:#d3d5d9;border-radius:6px"></div>
<div class="a" style="left:623px;top:620px;width:0;height:0;border-top:2.5px solid transparent;border-bottom:2.5px solid transparent;border-right:3px solid #6d7077"></div>
<div class="a" style="left:1012px;top:620px;width:0;height:0;border-top:2.5px solid transparent;border-bottom:2.5px solid transparent;border-left:3px solid #8d9096"></div>
<div class="a" style="left:610px;top:617px;width:2px;height:10px;background:#cfd1d5"></div>
<div class="a" style="left:1025px;top:617px;width:1px;height:10px;background:#c4c6ca"></div>
<div class="a" style="left:1027px;top:617px;width:1px;height:10px;background:#c4c6ca"></div>
<div class="a" id="status"></div>
<svg style="left:12px;top:616.5px;" width="76" height="12" viewBox="0 0 76 12"><path d="M1 1.500v9M7 1.500l-4.500 4.500l4.500 4.500" stroke="#c3c5c9" stroke-width="1.100"/><path d="M27 1.500l-4.500 4.500l4.500 4.500" stroke="#c3c5c9" stroke-width="1.100"/><path d="M44.500 1.500l4.500 4.500l-4.500 4.500" stroke="#c3c5c9" stroke-width="1.100"/><path d="M64 1.500l4.500 4.500l-4.500 4.500M70.500 1.500v9" stroke="#c3c5c9" stroke-width="1.100"/></svg>
<svg style="left:160px;top:617px;" width="11" height="11" viewBox="0 0 11 11"><path d="M5.500 0.500v10M0.500 5.500h10" stroke="#6f7279" stroke-width="1.100"/></svg>
<svg style="left:8px;top:636px;" width="14" height="13" viewBox="0 0 14 13"><circle cx="3.500" cy="3.500" r="2.600" stroke="#3f434b"/><circle cx="3.500" cy="3.500" r="0.800" stroke="#3f434b" stroke-width="0.800"/><path d="M8 2.500h4.500v7.500M1.500 8v3.500h11v-2h-9" stroke="#3f434b"/></svg>
<svg style="left:731px;top:636px;" width="14" height="13" viewBox="0 0 14 13"><path d="M0.800 8c2-3 4.200-4.300 6.200-4.300s4.200 1.300 6.200 4.300c-2 3-4.200 4.300-6.200 4.300s-4.200-1.300-6.200-4.300z" stroke="#3f434b"/><ellipse cx="7" cy="8" rx="2.600" ry="2.200" stroke="#3f434b"/><path d="M7 0.500v1.500M2.500 1.800l.8 1.200M11.500 1.800l-.8 1.200" stroke="#3f434b" stroke-width="0.800"/></svg>
<svg style="left:750px;top:637px;" width="14" height="12" viewBox="0 0 14 12"><path d="M4.500 0.500h4v3.500h4v4h-4v3.500h-4v-3.500h-4v-4h4z" stroke="#3f434b"/><rect x="4.500" y="4" width="4" height="4" stroke="#3f434b" stroke-width="0.700"/></svg>
<div class="a" style="left:784px;top:633px;width:18px;height:19px;background:#dcdee6"></div>
<svg style="left:787px;top:637px;" width="13" height="12" viewBox="0 0 13 12"><rect x="0.500" y="0.500" width="12" height="11" stroke="#3f434b"/><path d="M0.500 4h12M0.500 7.500h12M4.500 0.500v11M8.500 0.500v11" stroke="#3f434b"/></svg>
<svg style="left:808px;top:636px;" width="13" height="13" viewBox="0 0 13 13"><path d="M0.500 12.500v-12h12v12" stroke="#3f434b"/><rect x="2.500" y="2.500" width="8" height="8.500" stroke="#3f434b"/><path d="M6.500 2.500v8.500" stroke="#3f434b" stroke-width="0.800"/><path d="M0.500 12.500h12" stroke="#9a9da3"/></svg>
<svg style="left:829px;top:636px;" width="13" height="13" viewBox="0 0 13 13"><rect x="0.500" y="0.500" width="12" height="11" stroke="#3f434b"/><path d="M4.300 0.500v6.500h4.800v-6.500" stroke="#3f434b"/></svg>
<svg style="left:898px;top:636px;" width="152" height="14" viewBox="0 0 152 14"><path d="M1 7h7.500" stroke="#3f434b" stroke-width="1.600"/><path d="M19 7h62" stroke="#b9bbc0" stroke-width="1"/><path d="M90 7h40" stroke="#e3e4e8" stroke-width="1"/><circle cx="85.500" cy="7" r="4.700" fill="#f5f6f8" stroke="#3f434b" stroke-width="1"/><path d="M141.500 7h8M145.500 3v8" stroke="#3f434b" stroke-width="1.500"/></svg>
<svg style="left:1058px;top:637px;" width="13" height="13" viewBox="0 0 13 13"><path d="M1 4v-3h3M1 1l3.500 3.500M9 1h3v3M12 1l-3.500 3.500M1 9v3h3M1 12l3.500-3.500M9 12h3v-3M12 12l-3.500-3.500" stroke="#3f434b" stroke-width="0.900"/></svg>
<div class="t" style="left:856px;top:637px;font-size:10px;color:#4a4d55">160%</div>
<div class="a" style="left:885px;top:642px;width:0;height:0;border-left:2px solid transparent;border-right:2px solid transparent;border-top:2.3px solid #62666e"></div>
<div class="a" style="left:766px;top:642px;width:0;height:0;border-left:2px solid transparent;border-right:2px solid transparent;border-top:2.3px solid #62666e"></div>
</body>
</html>
